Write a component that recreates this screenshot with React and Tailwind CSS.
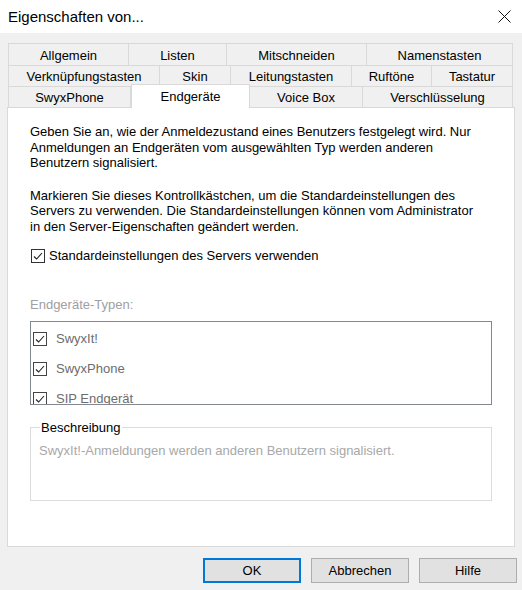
import React from 'react';

const tabRows = [
  [
    { label: 'Allgemein', w: 'w-[121px]' },
    { label: 'Listen', w: 'w-[98px]' },
    { label: 'Mitschneiden', w: 'w-[140px]' },
    { label: 'Namenstasten', w: 'w-[146px]' },
  ],
  [
    { label: 'Verknüpfungstasten', w: 'w-[152px]' },
    { label: 'Skin', w: 'w-[71px]' },
    { label: 'Leitungstasten', w: 'w-[121px]' },
    { label: 'Ruftöne', w: 'w-[80px]' },
    { label: 'Tastatur', w: 'w-[81px]' },
  ],
];

const lastRow = [
  { label: 'SwyxPhone', w: 'w-[123px]' },
  { label: 'Endgeräte', w: 'w-[119px]', active: true },
  { label: 'Voice Box', w: 'w-[113px]' },
  { label: 'Verschlüsselung', w: 'w-[150px]' },
];

const deviceTypes = ['SwyxIt!', 'SwyxPhone', 'SIP Endgerät'];

const Check = ({ box = 'border-[#333333]' }) => (
  <span className={`flex h-[14px] w-[14px] shrink-0 items-center justify-center border bg-white ${box}`}>
    <svg width="12" height="12" viewBox="0 0 12 12">
      <polyline points="2,6.5 4.6,9 10,3" fill="none" stroke="#222" strokeWidth="1.1" />
    </svg>
  </span>
);

const Tab = ({ label, w, first, h = 'h-[21px]' }) => (
  <div
    className={`${w} ${h} flex items-center justify-center border-t border-r border-[#d9d9d9] bg-[#f0f0f0] pt-[2px] ${first ? 'border-l' : ''}`}
  >
    {label}
  </div>
);

const Button = ({ label, primary }) => (
  <button
    className={`h-[25px] w-[98px] bg-[#e1e1e1] text-[13px] text-black ${primary ? 'border-2 border-[#0078d7]' : 'border border-[#adadad]'}`}
  >
    {label}
  </button>
);

export default function App() {
  return (
    <div
      className="flex h-[590px] w-[522px] flex-col bg-[#f0f0f0] text-[13px] text-black"
      style={{ fontFamily: '"Liberation Sans", Arial, sans-serif' }}
    >
      {/* title bar */}
      <div className="flex h-[33px] items-center justify-between bg-white pl-[8px] pr-[11px]">
        <span className="text-[15px] leading-none">Eigenschaften von...</span>
        <svg width="13" height="13" viewBox="0 0 13 13">
          <path d="M0.5 0.5 L12.5 12.5 M12.5 0.5 L0.5 12.5" stroke="#111" strokeWidth="1" />
        </svg>
      </div>

      <div className="flex flex-col px-[7px] pt-[10px]">
        {/* tab strip */}
        <div className="flex flex-col pl-[1px]">
          {tabRows.map((row, i) => (
            <div key={i} className="flex">
              {row.map((t, j) => (
                <Tab key={t.label} {...t} first={j === 0} h={i === 0 ? 'h-[22px]' : 'h-[21px]'} />
              ))}
            </div>
          ))}
          <div className="flex h-[21px] items-end">
            {lastRow.map((t, j) =>
              t.active ? (
                <div
                  key={t.label}
                  className={`${t.w} relative z-10 -mb-px flex h-[24px] items-center justify-center border-x border-t border-[#d9d9d9] bg-white pt-[1px]`}
                >
                  {t.label}
                </div>
              ) : (
                <Tab key={t.label} {...t} first={j === 0} />
              )
            )}
          </div>
        </div>

        {/* page content */}
        <div className="flex h-[440px] w-[508px] flex-col border border-[#d9d9d9] bg-white pl-[22px] pt-[16px] leading-[15.5px]">
          <p>
            Geben Sie an, wie der Anmeldezustand eines Benutzers festgelegt wird. Nur
            <br />
            Anmeldungen an Endgeräten vom ausgewählten Typ werden anderen
            <br />
            Benutzern signalisiert.
          </p>
          <p className="mt-[17px]">
            Markieren Sie dieses Kontrollkästchen, um die Standardeinstellungen des
            <br />
            Servers zu verwenden. Die Standardeinstellungen können vom Administrator
            <br />
            in den Server-Eigenschaften geändert werden.
          </p>

          <label className="mt-[14px] flex h-[16px] items-center gap-[4px] pl-[1px]">
            <Check />
            <span>Standardeinstellungen des Servers verwenden</span>
          </label>

          <div className="mt-[33px] text-[#a0a0a0]">Endgeräte-Typen:</div>

          {/* scrolling list, last entry cut by the frame */}
          <div className="mt-[8px] h-[84px] w-[462px] overflow-hidden border border-[#828790] pl-[2px] pt-[10px]">
            {deviceTypes.map((d) => (
              <div key={d} className="flex h-[30px] items-start gap-[9px]">
                <Check box="border-[#444444]" />
                <span className="-mt-px text-[#6d6d6d]">{d}</span>
              </div>
            ))}
          </div>

          <fieldset className="mt-[16px] h-[80px] w-[462px] border border-[#dcdcdc] px-[8px]">
            <legend className="ml-px px-px leading-[13px] text-black">Beschreibung</legend>
            <div className="mt-[9px] text-[#a8a8a8]">SwyxIt!-Anmeldungen werden anderen Benutzern signalisiert.</div>
          </fieldset>
        </div>
      </div>

      {/* dialog buttons */}
      <div className="mt-[11px] flex justify-end gap-[10px] pr-[5px]">
        <Button label="OK" primary />
        <Button label="Abbrechen" />
        <Button label="Hilfe" />
      </div>
    </div>
  );
}
